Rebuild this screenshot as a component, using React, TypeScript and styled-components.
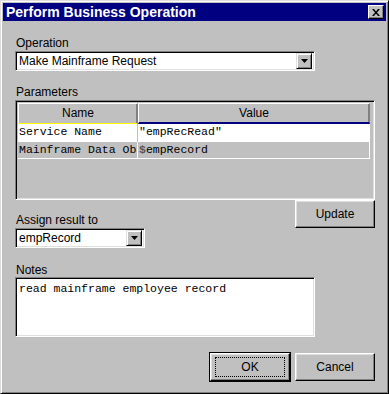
import React from 'react';
import styled, { createGlobalStyle } from 'styled-components';

const GlobalStyle = createGlobalStyle`
  html, body {
    margin: 0;
    padding: 0;
    background: #c0c0c0;
  }
  * { box-sizing: border-box; }
`;

const sans = `"Liberation Sans", Arial, sans-serif`;
const mono = `"Liberation Mono", "Courier New", monospace`;

const Window = styled.div`
  width: 389px;
  height: 394px;
  background: #c0c0c0;
  border: 1px solid;
  border-color: #dfdfdf #000 #000 #dfdfdf;
  box-shadow: inset 1px 1px #fff, inset -1px -1px #808080;
  padding: 2px 2px;
  font-family: ${sans};
  font-size: 12px;
  color: #000;
  display: flex;
  flex-direction: column;
`;

const TitleBar = styled.div`
  height: 18px;
  background: #000080;
  color: #fff;
  display: flex;
  align-items: center;
  justify-content: space-between;
  padding: 0 2px 0 3px;
  font-weight: bold;
  font-size: 14px;
`;

const CloseButton = styled.div`
  width: 16px;
  height: 14px;
  background: #c0c0c0;
  border: 1px solid;
  border-color: #fff #000 #000 #fff;
  box-shadow: inset -1px -1px #808080;
  display: flex;
  align-items: center;
  justify-content: center;
`;

const Body = styled.div`
  padding: 15px 12px 0 12px;
  display: flex;
  flex-direction: column;
`;

const Label = styled.div<{ $top?: number }>`
  line-height: 14px;
  height: 14px;
  margin-top: ${(p) => p.$top ?? 0}px;
  margin-left: 1px;
`;

const Sunken = styled.div<{ $w: number; $h: number }>`
  width: ${(p) => p.$w}px;
  height: ${(p) => p.$h}px;
  border: 1px solid;
  border-color: #808080 #fff #fff #808080;
  box-shadow: inset 1px 1px #000, inset -1px -1px #dfdfdf;
  background: #fff;
`;

const Combo = styled(Sunken)`
  margin-top: 1px;
  display: flex;
  align-items: center;
  padding: 2px;
`;

const ComboText = styled.div`
  flex: 1;
  padding-left: 1px;
  line-height: 16px;
`;

const DropButton = styled.div`
  width: 16px;
  height: 16px;
  background: #c0c0c0;
  border: 1px solid;
  border-color: #dfdfdf #000 #000 #dfdfdf;
  box-shadow: inset 1px 1px #fff, inset -1px -1px #808080;
  display: flex;
  align-items: center;
  justify-content: center;
`;

const Table = styled(Sunken)`
  margin-top: 1px;
  background: #c0c0c0;
  padding: 2px 4px 0 2px;
  display: flex;
  flex-direction: column;
`;

const Grid = styled.div`
  display: grid;
  grid-template-columns: 120px 232px;
`;

const HeaderCell = styled.div<{ $line: string; $lineH: number }>`
  height: 21px;
  text-align: center;
  line-height: 19px;
  border: 1px solid;
  border-color: #fff #808080 #808080 #fff;
  box-shadow: inset -1px 0 #808080;
  border-bottom: ${(p) => p.$lineH}px solid ${(p) => p.$line};
`;

const Cell = styled.div<{ $white?: boolean; $h: number; $grid?: string }>`
  height: ${(p) => p.$h}px;
  background: ${(p) => (p.$white ? '#fff' : '#c0c0c0')};
  font-family: ${mono};
  font-size: 11.5px;
  line-height: 16px;
  white-space: nowrap;
  overflow: hidden;
  padding-left: 1px;
  border-right: 1px solid ${(p) => p.$grid ?? '#fff'};
`;

const RowLine = styled.div`
  grid-column: 1 / -1;
  height: 1px;
  background: #fff;
`;

const Dollar = styled.span`
  font-weight: bold;
  color: #555;
`;

const MidRow = styled.div`
  display: flex;
  justify-content: space-between;
  width: 360px;
`;

const Column = styled.div`
  display: flex;
  flex-direction: column;
`;

const Button = styled.div<{ $default?: boolean }>`
  width: 80px;
  height: 28px;
  display: flex;
  align-items: center;
  justify-content: center;
  background: #c0c0c0;
  border: 1px solid;
  border-color: #fff #000 #000 #fff;
  box-shadow: inset -1px -1px #808080, inset 1px 1px #dfdfdf;
  ${(p) => p.$default && `outline: 1px solid #000;`}
`;

const FocusRing = styled.div`
  border: 1px dotted #000;
  width: 70px;
  height: 20px;
  display: flex;
  align-items: center;
  justify-content: center;
`;

const Notes = styled(Sunken)`
  font-family: ${mono};
  font-size: 11.5px;
  padding: 4px 3px;
  line-height: 14px;
`;

const Footer = styled.div`
  margin-top: 16px;
  display: flex;
  justify-content: flex-end;
  gap: 5px;
  width: 360px;
`;

const Arrow = () => (
  <svg width="7" height="4" viewBox="0 0 7 4">
    <path d="M0 0h7L3.5 4z" fill="#000" />
  </svg>
);

export default function App() {
  return (
    <>
      <GlobalStyle />
      <Window>
        <TitleBar>
          <span>Perform Business Operation</span>
          <CloseButton>
            <svg width="8" height="7" viewBox="0 0 8 7">
              <path d="M0 0h2l2 2.5L6 0h2L5 3.5 8 7H6L4 4.5 2 7H0l3-3.5z" fill="#000" />
            </svg>
          </CloseButton>
        </TitleBar>
        <Body>
          <Label>Operation</Label>
          <Combo $w={300} $h={20}>
            <ComboText>Make Mainframe Request</ComboText>
            <DropButton>
              <Arrow />
            </DropButton>
          </Combo>

          <Label $top={14}>Parameters</Label>
          <Table $w={360} $h={100}>
            <Grid>
              <HeaderCell $line="#ffff00" $lineH={1}>Name</HeaderCell>
              <HeaderCell $line="#000080" $lineH={2}>Value</HeaderCell>
              <Cell $white $h={18} $grid="#c0c0c0">Service Name</Cell>
              <Cell $white $h={18}>"empRecRead"</Cell>
              <Cell $h={16}>Mainframe Data Ob</Cell>
              <Cell $h={16}>
                <Dollar>$</Dollar>empRecord
              </Cell>
              <RowLine />
            </Grid>
          </Table>

          <MidRow>
            <Column>
              <Label $top={13}>Assign result to</Label>
              <Combo $w={130} $h={20}>
                <ComboText>empRecord</ComboText>
                <DropButton>
                  <Arrow />
                </DropButton>
              </Combo>
            </Column>
            <Button>Update</Button>
          </MidRow>

          <Label $top={15}>Notes</Label>
          <Notes $w={300} $h={60}>read mainframe employee record</Notes>

          <Footer>
            <Button $default>
              <FocusRing>OK</FocusRing>
            </Button>
            <Button>Cancel</Button>
          </Footer>
        </Body>
      </Window>
    </>
  );
}
